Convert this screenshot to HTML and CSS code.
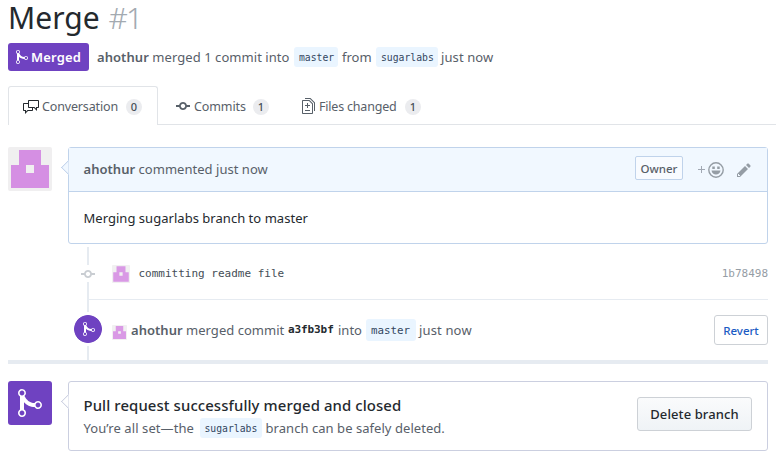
FILE: index.html
```html
<!DOCTYPE html>
<html lang="en">
<head>
<meta charset="utf-8">
<title>Merge #1</title>
<link rel="stylesheet" href="styles.css">
</head>
<body>
<svg class="defs" width="0" height="0">
  <symbol id="merge" viewBox="0 0 12 16"><path fill-rule="evenodd" d="M10 7c-.73 0-1.38.41-1.73 1.02V8C7.22 7.98 6 7.64 5.14 6.98c-.75-.58-1.5-1.61-1.89-2.44A1.993 1.993 0 0 0 2 .99C.89.99 0 1.89 0 3a2 2 0 0 0 1 1.72v6.56c-.59.35-1 .99-1 1.72 0 1.11.89 2 2 2a1.993 1.993 0 0 0 1-3.72V7.67c.67.7 1.44 1.27 2.3 1.69.86.42 2.03.63 2.97.64v-.02c.36.61 1 1.02 1.73 1.02 1.11 0 2-.89 2-2 0-1.11-.89-2-2-2zm-6.8 6c0 .66-.55 1.2-1.2 1.2-.65 0-1.2-.55-1.2-1.2 0-.65.55-1.2 1.2-1.2.65 0 1.2.55 1.2 1.2zM2 4.2C1.34 4.2.8 3.65.8 3c0-.65.55-1.2 1.2-1.2.65 0 1.2.55 1.2 1.2 0 .65-.55 1.2-1.2 1.2zm8 6c-.66 0-1.2-.55-1.2-1.2 0-.65.55-1.2 1.2-1.2.65 0 1.2.55 1.2 1.2 0 .65-.55 1.2-1.2 1.2z"/></symbol>
  <symbol id="commit" viewBox="0 0 14 16"><path fill-rule="evenodd" d="M10.86 7c-.45-1.72-2-3-3.86-3-1.86 0-3.41 1.28-3.86 3H0v2h3.14c.45 1.72 2 3 3.86 3 1.86 0 3.41-1.28 3.86-3H14V7h-3.14zM7 10.2c-1.22 0-2.2-.98-2.2-2.2 0-1.22.98-2.2 2.2-2.2 1.22 0 2.2.98 2.2 2.2 0 1.22-.98 2.2-2.2 2.2z"/></symbol>
  <symbol id="avatar" viewBox="0 0 44 44"><rect width="44" height="44" rx="2" fill="#f0eff0"/><path fill="#d58fe3" fill-rule="evenodd" d="M11 3h22v15h8v23H3V18h8zM18 18v8h8v-8z"/></symbol>
</svg>

<header>
  <h1>Merge <span class="number">#1</span></h1>
  <div class="meta">
    <span class="state"><svg width="12" height="16"><use href="#merge"/></svg><b>Merged</b></span>
    <span class="t meta-a"><b>ahothur</b> merged 1 commit into</span>
    <code class="branch b-master">master</code>
    <span class="t meta-b">from</span>
    <code class="branch b-sugar">sugarlabs</code>
    <span class="t meta-c">just now</span>
  </div>
</header>

<nav class="tabs">
  <a class="tab active"><svg width="16" height="16" viewBox="0 0 16 16"><path fill-rule="evenodd" d="M15 1H6c-.55 0-1 .45-1 1v2H1c-.55 0-1 .45-1 1v6c0 .55.45 1 1 1h1v3l3-3h4c.55 0 1-.45 1-1V9h1l3 3V9h1c.55 0 1-.45 1-1V2c0-.55-.45-1-1-1zM9 11H4.5L3 12.5V11H1V5h4v3c0 .55.45 1 1 1h3v2zm6-3h-2v1.5L11.5 8H6V2h9v6z"/></svg><span class="label l-conv">Conversation</span><i class="count">0</i></a>
  <a class="tab commits"><svg width="14" height="16"><use href="#commit"/></svg><span class="label l-com">Commits</span><i class="count">1</i></a>
  <a class="tab files"><svg width="13" height="16" viewBox="0 0 13 16"><path fill-rule="evenodd" d="M6 7h2v1H6v2H5V8H3V7h2V5h1v2zm-3 6h5v-1H3v1zM7.5 2L11 5.5V15c0 .55-.45 1-1 1H1c-.55 0-1-.45-1-1V3c0-.55.45-1 1-1h6.5zM10 6L7 3H1v12h9V6zM8.5 0H3v1h5l4 4v8h1V4.5L8.5 0z"/></svg><span class="label l-files">Files changed</span><i class="count">1</i></a>
</nav>

<section class="entry">
  <svg class="avatar" width="44" height="44"><use href="#avatar"/></svg>
  <article class="box comment">
    <div class="comment-head">
      <span class="t head-text"><b>ahothur</b> commented just now</span>
      <span class="owner">Owner</span>
      <svg class="react" width="27" height="18" viewBox="0 0 27 18"><path d="M1 8.500h7M4.500 5v7" stroke="#a1a8b3" fill="none"/><circle cx="19" cy="9" r="7.200" fill="none" stroke="#959da5" stroke-width="1.400"/><path d="M15.300 5.500h2.500v2.500h-2.500zM20.200 5.500h2.500v2.500h-2.500zM14.500 9.500h9c-.3 2.500-2.300 4-4.500 4s-4.200-1.500-4.500-4z"/></svg>
      <svg class="pencil" width="14" height="16" viewBox="0 0 14 16"><path fill-rule="evenodd" d="M0 12v3h3l8-8-3-3-8 8zm3 2H1v-2h1v1h1v1zm10.300-9.300L12 6 9 3l1.300-1.300a.996.996 0 0 1 1.410 0l1.590 1.590c.39.39.39 1.020 0 1.410z"/></svg>
    </div>
    <p class="comment-body"><span class="t">Merging sugarlabs branch to master</span></p>
  </article>
</section>

<section class="timeline">
  <div class="row commit-row">
    <span class="node"><svg width="14" height="16"><use href="#commit"/></svg></span>
    <svg class="mini" width="18" height="18"><use href="#avatar"/></svg>
    <code class="message">committing readme file</code>
    <code class="sha">1b78498</code>
  </div>
  <div class="row merge-row">
    <span class="disc"><svg width="12" height="16"><use href="#merge"/></svg></span>
    <svg class="mini small" width="15" height="15"><use href="#avatar"/></svg>
    <span class="t merge-a"><b>ahothur</b> merged commit</span>
    <code class="hash">a3fb3bf</code>
    <span class="t merge-b">into</span>
    <code class="branch b-master2">master</code>
    <span class="t merge-c">just now</span>
    <button class="revert">Revert</button>
  </div>
</section>

<section class="entry finish">
  <div class="tile"><svg width="24" height="32"><use href="#merge"/></svg></div>
  <article class="box result">
    <div class="result-copy">
      <h2>Pull request successfully merged and closed</h2>
      <p><span class="t res-a">You’re all set—the</span><code class="branch b-sugar2">sugarlabs</code><span class="t res-b">branch can be safely deleted.</span></p>
    </div>
    <button class="delete">Delete branch</button>
  </article>
</section>
</body>
</html>
```
FILE: styles.css
```css
* { box-sizing: border-box; }
body { margin: 0; width: 776px; height: 458px; overflow: hidden; background: #fff; color: #586069; font: 13px/20px "Noto Sans", sans-serif; }
svg { display: block; flex: none; fill: currentColor; }
.defs { position: absolute; }
h1, h2, p { margin: 0; }
b { font-weight: 600; }
code { font: 11px/20px "DejaVu Sans Mono", monospace; }
.t, .label, h1, h2, code, b { white-space: nowrap; }

header { height: 86px; padding-left: 8px; }
h1 { height: 43px; line-height: 36px; font-size: 30px; font-weight: 400; color: #24292e; }
.number { margin-left: 1px; color: #a3aab1; font-weight: 300; letter-spacing: -1.8px; }
.meta { display: flex; align-items: center; height: 28px; }
.state { display: flex; align-items: center; gap: 3px; width: 81px; height: 28px; padding-left: 8px; border-radius: 3px; background: #6f42c1; color: #fff; }
.state b { letter-spacing: .15px; }
.meta-a { width: 193px; margin-left: 8px; letter-spacing: .06px; }
.branch { height: 20px; padding: 0 5px; border-radius: 3px; background: #eaf5ff; color: #33475f; font-size: 9.75px; line-height: 21px; }
.b-master { width: 44px; margin-left: 4px; }
.b-master2 { width: 50px; height: 22px; margin-left: 4px; font-size: 10.800px; line-height: 23px; }
.meta-b { width: 29px; margin-left: 4px; }
.b-sugar, .b-sugar2 { width: 62px; margin-left: 5px; }
.meta-c { margin-left: 3px; letter-spacing: .1px; }

.tabs { display: flex; height: 39px; margin-left: 8px; border-bottom: 1px solid #e1e4e8; }
.tab { display: flex; align-items: center; height: 39px; padding-top: 2px; font-size: 12.5px; }
.active { width: 150px; padding-left: 14px; border: 1px solid #e1e4e8; border-bottom: 0; border-radius: 3px 3px 0 0; background: #fff; }
.tab svg { margin-top: -1px; }
.active svg { color: #24292e; }
.label { margin-left: 4px; }
.l-conv { width: 84px; margin-left: 3px; letter-spacing: -.15px; }
.commits { width: 125px; padding-left: 18px; }
.l-com { width: 59px; letter-spacing: -.1px; }
.files { padding-left: 19px; }
.l-files { width: 86px; letter-spacing: -.2px; }
.count { width: 16px; height: 16px; border-radius: 8px; background: #ebecef; color: #444d56; font: 500 11px/16px "Noto Sans", sans-serif; text-align: center; }

.entry { display: flex; justify-content: space-between; margin: 22px 8px 0; }
.box { position: relative; width: 700px; border: 1px solid #c0d3eb; border-radius: 3px; background: #fff; }
.box::before { content: ""; position: absolute; left: -6px; top: 14px; width: 10px; height: 10px; border: solid #c0d3eb; border-width: 0 0 1px 1px; background: #f1f8ff; transform: rotate(45deg); clip-path: polygon(0 0, 100% 100%, 0 100%); }
.comment { height: 97px; }
.comment-head { display: flex; align-items: center; height: 44px; padding-left: 14.500px; border-bottom: 1px solid #c0d3eb; background: #f1f8ff; }
.head-text { margin-top: -2px; letter-spacing: .03px; }
.owner { width: 48px; height: 24px; margin-left: auto; margin-top: -3px; border: 1px solid #c0d3eb; border-radius: 2px; background: #f8fbff; font-size: 11.500px; line-height: 23px; text-align: center; font-weight: 500; }
.react { margin-left: 14px; color: #959da5; }
.pencil { margin: 0 16px 0 13px; color: #959da5; }
.comment-body { padding: 16px 14.500px; color: #24292e; letter-spacing: .03px; }

.timeline { height: 120px; margin: 0 8px; border-bottom: 4px solid #e6ebf1; background: linear-gradient(#e6ebf1, #e6ebf1) 79px 3px / 2px 117px no-repeat; }
.row { display: flex; align-items: center; }
.commit-row { height: 56px; margin-left: 80px; padding-top: 4px; border-bottom: 1px solid #e6ebf1; }
.node { display: grid; place-items: center; width: 16px; height: 17px; margin-left: -8px; background: #fff; color: #c9cdd2; }
.mini { margin-left: 16px; opacity: .9; }
.message { margin-left: 8.500px; color: #444d56; }
.sha { margin-left: auto; color: #959da5; }
.merge-row { height: 60px; padding: 0 0 0 66px; }
.disc { display: grid; place-items: center; width: 28px; height: 34px; margin-top: -2px; background: radial-gradient(circle, #6f42c1 13.500px, #fff 14.300px); color: #fff; padding-left: 1px; }
.small { margin: 4px 0 0 10px; }
.merge-a { width: 153px; margin-left: 4px; letter-spacing: .03px; }
.hash { width: 47px; margin-left: 4px; color: #24292e; font-weight: 700; letter-spacing: -.1px; }
.merge-b { width: 24px; margin-left: 3px; }
.merge-c { margin-left: 3px; letter-spacing: .15px; }
button { padding: 0; border: 1px solid #cdd1d6; border-radius: 3px; font-family: "Noto Sans", sans-serif; white-space: nowrap; }
.revert { width: 54px; height: 30px; margin-left: auto; background: #fff; color: #1b5bc4; font-size: 11.5px; font-weight: 500; }

.finish { margin-top: 17px; }
.tile { display: grid; place-items: center; width: 44px; height: 44px; border-radius: 3px; background: #6f42c1; color: #fff; }
.result { display: flex; align-items: center; justify-content: space-between; height: 70px; padding: 0 15px 0 14.500px; border-color: #cbcfe0; }
.result::before { border-color: #cbcfe0; background: #fff; }
.result-copy { height: 44px; }
h2 { color: #24292e; font-size: 14.900px; line-height: 22px; font-weight: 500; letter-spacing: .1px; }
.result p { display: flex; align-items: center; height: 24px; }
.res-a { width: 112px; letter-spacing: .08px; }
.b-sugar2 { margin-left: 4px; }
.res-b { margin-left: 4px; letter-spacing: .05px; }
.delete { width: 115px; height: 34px; margin-top: -4px; background: linear-gradient(#fafbfc, #eff3f6); color: #24292e; font-size: 13px; font-weight: 500; letter-spacing: .1px; }
```
